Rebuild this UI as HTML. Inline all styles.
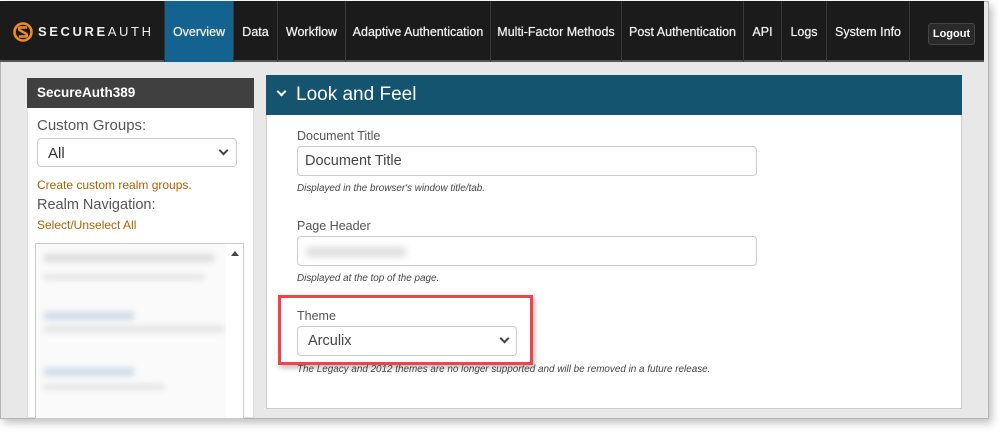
<!DOCTYPE html>
<html><head><style>
*{box-sizing:border-box;margin:0;padding:0}
body{width:1000px;height:433px;background:#fff;font-family:"Liberation Sans",Arial,sans-serif;position:relative;overflow:hidden}
.frame{position:absolute;left:0;top:1px;width:989px;height:418px;background:#e8e8e8;border:1px solid #b5b5b5;box-shadow:3px 4px 8px rgba(0,0,0,.25)}
.nav{position:absolute;left:0;top:1px;width:984px;height:61px;background:#1b1b1b;border-bottom:2px solid #555}
.nav .it{position:absolute;top:0;height:61px;line-height:63px;color:#f2f2f2;font-size:12.5px;font-weight:normal;text-shadow:0 0 0.6px #fff;text-align:center;border-left:1px solid #3a3a3a;white-space:nowrap}
.a{position:absolute}
.lbl{position:absolute;color:#555;font-size:12.5px}
.inp{position:absolute;border:1px solid #ccc;border-radius:4px;background:#fff}
.help{position:absolute;font-size:9.9px;font-style:italic;color:#444}
.chev{position:absolute;width:7px;height:7px;border-right:2px solid #444;border-bottom:2px solid #444;transform:rotate(45deg)}
</style></head><body>
<div class="frame"></div>
<div class="nav">
  <svg class="a" style="left:12px;top:20px" width="22" height="22" viewBox="0 0 22 22"><circle cx="11" cy="11" r="8.5" fill="none" stroke="#f08a24" stroke-width="2.6"/><path d="M15 6.5 L8 6.5 Q6.5 6.5 7.5 9 L14.5 13 Q15.5 15.5 14 15.5 L7 15.5" fill="none" stroke="#f08a24" stroke-width="2.4"/></svg>
  <div class="a" style="left:38px;top:23px;color:#eee;font-size:13px;letter-spacing:2.6px;font-weight:bold;white-space:nowrap">SECURE<span style="font-weight:normal">AUTH</span></div>
  <div class="it" style="left:164px;width:69px;background:#13628f;border-left:1px solid #333">Overview</div>
  <div class="it" style="left:233px;width:44px">Data</div>
  <div class="it" style="left:277px;width:68px">Workflow</div>
  <div class="it" style="left:345px;width:145px">Adaptive Authentication</div>
  <div class="it" style="left:490px;width:131px">Multi-Factor Methods</div>
  <div class="it" style="left:621px;width:122px">Post Authentication</div>
  <div class="it" style="left:743px;width:38px">API</div>
  <div class="it" style="left:781px;width:45px">Logs</div>
  <div class="it" style="left:826px;width:83px">System Info</div>
  <div class="it" style="left:909px;width:75px;border-right:none"></div>
  <div class="a" style="left:928px;top:22px;width:47px;height:22px;background:#2a2a2a;border:1px solid #444;border-radius:3px;color:#fff;font-size:11px;font-weight:bold;line-height:20px;text-align:center">Logout</div>
</div>
<!-- sidebar -->
<div class="a" style="left:27px;top:78px;width:227px;height:340px;background:#fff;border:1px solid #ddd"></div>
<div class="a" style="left:27px;top:78px;width:227px;height:30px;background:#404040;color:#fff;font-weight:bold;font-size:13.5px;line-height:30px;padding-left:10px">SecureAuth389</div>
<div class="a" style="left:37px;top:117px;font-size:15px;color:#555">Custom Groups:</div>
<div class="inp" style="left:37px;top:138px;width:200px;height:29px;font-size:15px;color:#333;padding:6px 0 0 10px">All</div>
<div class="chev" style="left:220px;top:147px"></div>
<div class="a" style="left:37px;top:178px;font-size:12px;color:#b35f00">Create custom realm groups.</div>
<div class="a" style="left:37px;top:197px;font-size:14.5px;color:#555">Realm Navigation:</div>
<div class="a" style="left:37px;top:218px;font-size:12px;color:#b35f00">Select/Unselect All</div>
<div class="a" style="left:35px;top:243px;width:209px;height:176px;border:1px solid #ccc;background:#fafafa;overflow:hidden">
  <div class="a" style="left:8px;top:10px;width:170px;height:8px;background:#ddd;filter:blur(3px)"></div>
  <div class="a" style="left:8px;top:30px;width:160px;height:6px;background:#e4e4e4;filter:blur(3px)"></div>
  <div class="a" style="left:8px;top:68px;width:90px;height:8px;background:#cfdbe8;filter:blur(3px)"></div>
  <div class="a" style="left:8px;top:82px;width:180px;height:6px;background:#e2e2e2;filter:blur(3px)"></div>
  <div class="a" style="left:8px;top:124px;width:90px;height:8px;background:#cfdbe8;filter:blur(3px)"></div>
  <div class="a" style="left:8px;top:140px;width:120px;height:6px;background:#e4e4e4;filter:blur(3px)"></div>
  <div class="a" style="left:190px;top:0;width:18px;height:176px;background:#fff"></div>
  <div class="a" style="left:195px;top:7px;border-left:4px solid transparent;border-right:4px solid transparent;border-bottom:5px solid #444"></div>
</div>
<!-- main panel -->
<div class="a" style="left:266px;top:75px;width:696px;height:334px;background:#fff;border:1px solid #ccc"></div>
<div class="a" style="left:266px;top:75px;width:696px;height:40px;background:#15546f;color:#fff;font-size:19px;line-height:40px;padding-left:30px">Look and Feel</div>
<div class="a" style="left:278px;top:88px;width:7px;height:7px;border-right:2.5px solid #fff;border-bottom:2.5px solid #fff;transform:rotate(45deg)"></div>
<div class="lbl" style="left:297px;top:129px">Document Title</div>
<div class="inp" style="left:297px;top:146px;width:460px;height:30px;font-size:14.5px;color:#444;padding:6px 0 0 7px">Document Title</div>
<div class="help" style="left:297px;top:183px">Displayed in the browser's window title/tab.</div>
<div class="lbl" style="left:297px;top:219px">Page Header</div>
<div class="inp" style="left:297px;top:236px;width:460px;height:30px"><div class="a" style="left:8px;top:10px;width:100px;height:10px;background:#ddd;filter:blur(4px)"></div></div>
<div class="help" style="left:297px;top:273px">Displayed at the top of the page.</div>
<div class="a" style="left:278px;top:295px;width:255px;height:70px;border:3px solid #f0444a;box-shadow:2px 3px 5px rgba(0,0,0,.25)"></div>
<div class="lbl" style="left:297px;top:309px">Theme</div>
<div class="inp" style="left:297px;top:326px;width:220px;height:30px;font-size:14.5px;color:#444;padding:6px 0 0 10px">Arculix</div>
<div class="chev" style="left:501px;top:335px"></div>
<div class="help" style="left:297px;top:364px">The Legacy and 2012 themes are no longer supported and will be removed in a future release.</div>
</body></html>
